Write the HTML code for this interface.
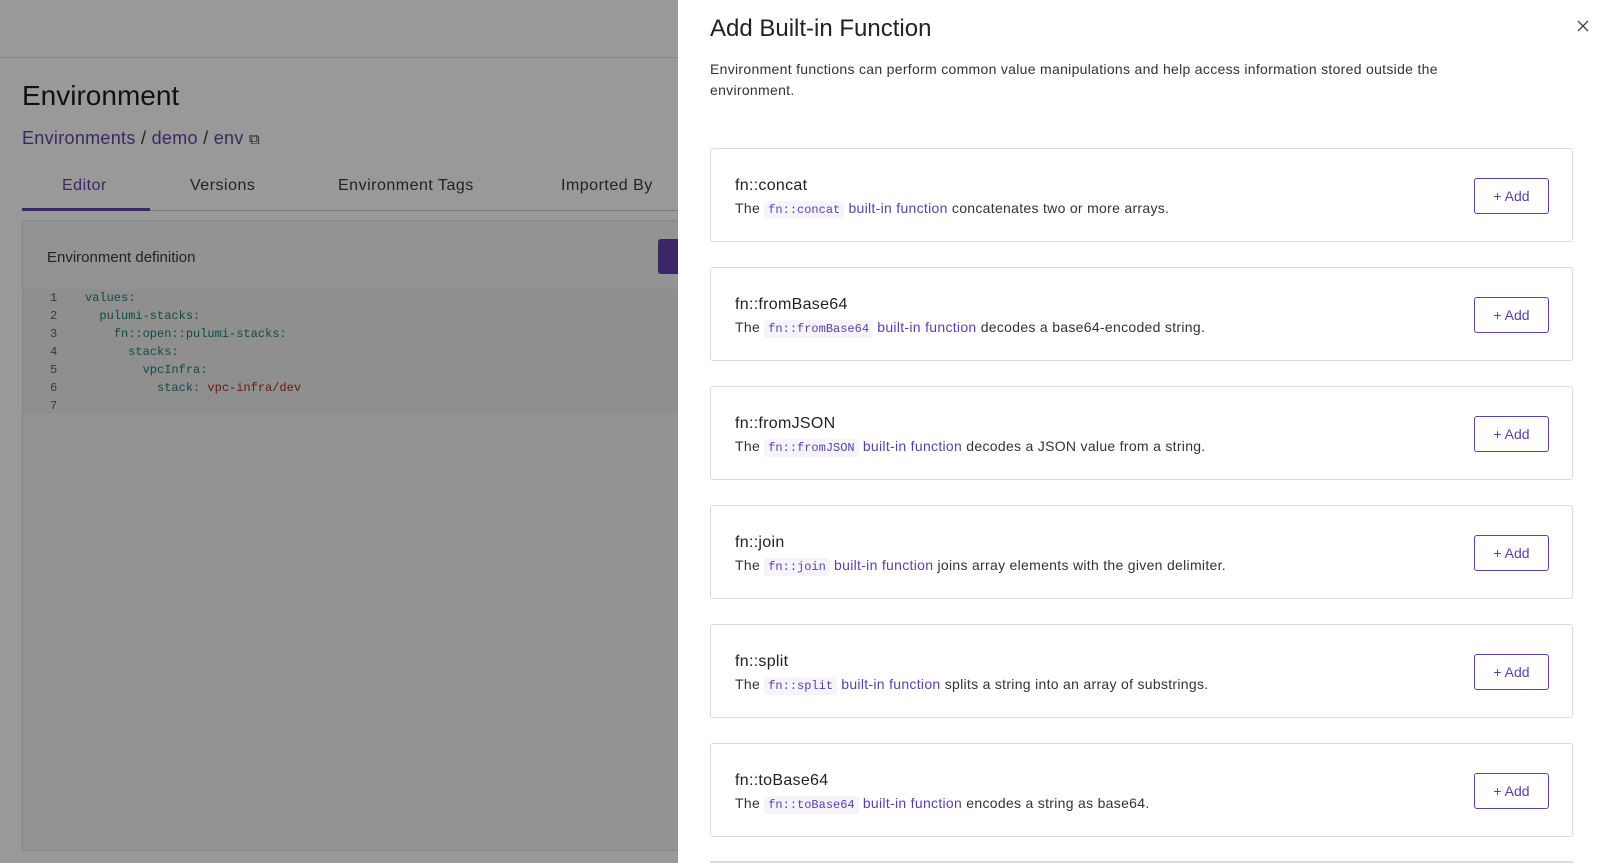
<!DOCTYPE html>
<html><head><meta charset="utf-8"><style>
*{box-sizing:border-box;margin:0;padding:0}
html,body{width:1597px;height:863px;overflow:hidden}
body{position:relative;font-family:"Liberation Sans",sans-serif;background:#999}
.l{position:absolute}
.mono{font-family:"Liberation Mono",monospace}
.panel{position:absolute;left:678px;top:0;width:919px;height:863px;background:#fff;overflow:hidden}
.card{position:absolute;left:32px;width:863px;height:94px;border:1px solid #dcdcdc;border-radius:3px;background:#fff}
.card h3{position:absolute;left:24px;top:28px;font-size:16px;font-weight:normal;color:#222;letter-spacing:0.3px}
.card p{position:absolute;left:24px;top:51px;font-size:14px;color:#333;white-space:nowrap;letter-spacing:0.3px}
.card code{font-family:"Liberation Mono",monospace;font-size:12px;color:#5b3fb0;background:#f6f4fb;padding:2px 4px;border-radius:3px;letter-spacing:0}
.card a{color:#5b3fb0}
.btn{position:absolute;left:763px;top:29px;width:75px;height:36px;border:1px solid #5b3fb0;border-radius:3px;color:#5b3fb0;font-size:14px;text-align:center;line-height:34px}
.code div{height:18px;line-height:18px;font-size:12px;white-space:pre}
</style></head><body>
<div class="l" style="left:0;top:57px;width:678px;height:1px;background:#888"></div>
<div class="l" style="left:22px;top:80px;font-size:28px;color:#111">Environment</div>
<div class="l" style="left:22px;top:128px;font-size:18px;color:#3c2766;letter-spacing:0.3px">Environments <span style="color:#222">/</span> demo <span style="color:#222">/</span> env <span style="color:#222;font-size:15px">⧉</span></div>
<div class="l" style="left:62px;top:177px;font-size:16px;color:#3c2766;letter-spacing:0.5px">Editor</div>
<div class="l" style="left:190px;top:177px;font-size:16px;color:#222;letter-spacing:0.5px">Versions</div>
<div class="l" style="left:338px;top:177px;font-size:16px;color:#222;letter-spacing:0.5px">Environment Tags</div>
<div class="l" style="left:561px;top:177px;font-size:16px;color:#222;letter-spacing:0.5px">Imported By</div>
<div class="l" style="left:22px;top:210px;width:656px;height:1px;background:#777"></div>
<div class="l" style="left:22px;top:208px;width:128px;height:3px;background:#3c2766"></div>
<div class="l" style="left:22px;top:220px;width:660px;height:631px;background:#939393;border:1px solid #888;border-radius:3px"></div>
<div class="l" style="left:47px;top:249px;font-size:15px;color:#222">Environment definition</div>
<div class="l" style="left:658px;top:239px;width:30px;height:35px;background:#3c2766;border-radius:3px"></div>
<div class="l" style="left:23px;top:289px;width:655px;height:125px;background:#8f8f8f"></div>
<div class="l mono code" style="left:50px;top:289px;color:#1f3f55">
<div>1</div><div>2</div><div>3</div><div>4</div><div>5</div><div>6</div><div>7</div></div>
<div class="l mono code" style="left:85px;top:289px;color:#104a48">
<div>values:</div><div>  pulumi-stacks:</div><div>    fn::open::pulumi-stacks:</div><div>      stacks:</div><div>        vpcInfra:</div><div>          stack: <span style="color:#6b1515">vpc-infra/dev</span></div></div>
<div class="panel">
<div class="l" style="left:32px;top:15px;font-size:24px;color:#222">Add Built-in Function</div>
<svg class="l" style="left:899px;top:20px" width="12" height="12" viewBox="0 0 12 12"><path d="M1 1L11 11M11 1L1 11" stroke="#444" stroke-width="1.3"/></svg>
<div class="l" style="left:32px;top:59px;width:790px;font-size:14px;line-height:21px;color:#333;letter-spacing:0.3px">Environment functions can perform common value manipulations and help access information stored outside the environment.</div>
<div class="card" style="top:148px"><h3>fn::concat</h3><p>The <code>fn::concat</code> <a>built-in function</a> concatenates two or more arrays.</p><div class="btn">+ Add</div></div>
<div class="card" style="top:267px"><h3>fn::fromBase64</h3><p>The <code>fn::fromBase64</code> <a>built-in function</a> decodes a base64-encoded string.</p><div class="btn">+ Add</div></div>
<div class="card" style="top:386px"><h3>fn::fromJSON</h3><p>The <code>fn::fromJSON</code> <a>built-in function</a> decodes a JSON value from a string.</p><div class="btn">+ Add</div></div>
<div class="card" style="top:505px"><h3>fn::join</h3><p>The <code>fn::join</code> <a>built-in function</a> joins array elements with the given delimiter.</p><div class="btn">+ Add</div></div>
<div class="card" style="top:624px"><h3>fn::split</h3><p>The <code>fn::split</code> <a>built-in function</a> splits a string into an array of substrings.</p><div class="btn">+ Add</div></div>
<div class="card" style="top:743px"><h3>fn::toBase64</h3><p>The <code>fn::toBase64</code> <a>built-in function</a> encodes a string as base64.</p><div class="btn">+ Add</div></div>
<div class="l" style="left:32px;top:861px;width:863px;height:2px;background:#dcdcdc"></div>
</div>
</body></html>
